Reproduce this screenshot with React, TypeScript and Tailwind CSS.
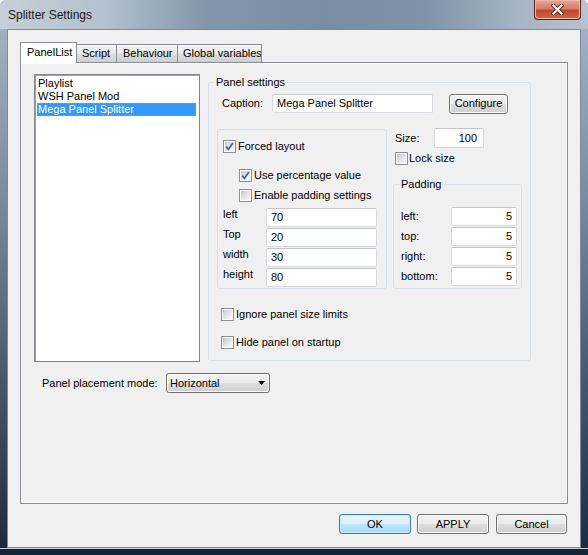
import React from "react";

// ─── small win7 controls ───
function Check({ checked }: { checked?: boolean }) {
  return (
    <span className="relative flex h-[13px] w-[13px] shrink-0 items-center justify-center border border-[#8e8f8f] bg-white">
      <span className="h-[9px] w-[9px] bg-[linear-gradient(135deg,#c4c8ce_0%,#e4e6e9_55%,#fafafa_100%)]" />
      {checked && (
        <svg viewBox="0 0 13 13" className="absolute inset-[-1px] h-[13px] w-[13px]">
          <path d="M3.2 6.6 L5.4 9.4 L9.9 3.1" fill="none" stroke="#4a5e8c" strokeWidth="1.7" />
        </svg>
      )}
    </span>
  );
}

function CheckRow({ checked, label, className = "" }: { checked?: boolean; label: string; className?: string }) {
  return (
    <div className={`flex h-[13px] items-center ${className}`}>
      <Check checked={checked} />
      <span className="ml-[2px] whitespace-nowrap">{label}</span>
    </div>
  );
}

function Field({ value, className = "", right }: { value: string; className?: string; right?: boolean }) {
  return (
    <div
      className={`flex shrink-0 items-center rounded-[2px] border border-[#d6dadf] border-t-[#c2c6cc] bg-white ${
        right ? "justify-end pr-[4px]" : "pl-[4px]"
      } ${className}`}
    >
      {value}
    </div>
  );
}

function Btn({ children, className = "", focus }: { children: React.ReactNode; className?: string; focus?: boolean }) {
  return (
    <div
      className={`flex h-[20px] shrink-0 items-center justify-center rounded-[3px] border ${
        focus
          ? "border-[#3c7fb1] bg-[linear-gradient(#eaf6fd_0%,#d9f0fc_48%,#bee6fd_52%,#a7d9f5_100%)] shadow-[inset_0_0_0_1px_#c6e8fb]"
          : "border-[#707070] bg-[linear-gradient(#f2f2f2_0%,#ebebeb_48%,#dddddd_52%,#cfcfcf_100%)] shadow-[inset_0_0_0_1px_#fbfbfb]"
      } ${className}`}
    >
      {children}
    </div>
  );
}

function CloseButton() {
  return (
    <div className="ml-auto mr-[7px] flex h-[20px] w-[47px] items-center justify-center rounded-b-[4px] border border-t-0 border-[#5b2119] bg-[linear-gradient(#e8a898_0%,#d77c68_45%,#c4442c_55%,#d0694c_100%)] shadow-[inset_0_0_0_1px_#f0b7a8]">
      <svg width="13" height="11" viewBox="0 0 13 11">
        <path d="M2.5 1.5 L10.5 9.5 M10.5 1.5 L2.5 9.5" stroke="#5a2016" strokeWidth="4" strokeLinecap="square" />
        <path d="M2.5 1.5 L10.5 9.5 M10.5 1.5 L2.5 9.5" stroke="#ffffff" strokeWidth="2.2" strokeLinecap="square" />
      </svg>
    </div>
  );
}

// ─── tabs ───
function Tabs() {
  const tab =
    "flex h-[18px] shrink-0 items-center whitespace-nowrap overflow-hidden border border-b-0 border-[#898c95] bg-[linear-gradient(#f3f3f3_0%,#ebebeb_48%,#dddddd_52%,#cfcfcf_100%)] shadow-[inset_0_1px_0_#fcfcfc]";
  return (
    <div className="flex h-[20px] shrink-0 items-end">
      <div className="relative z-10 -mb-px flex h-[21px] w-[57px] shrink-0 whitespace-nowrap border border-b-0 border-[#898c95] bg-white pl-[6px] pt-[3px]">
        PanelList
      </div>
      <div className={`${tab} -ml-px w-[41px] pl-[5px]`}>Script</div>
      <div className={`${tab} -ml-px w-[62px] pl-[6px]`}>Behaviour</div>
      <div className={`${tab} -ml-px w-[85px] pl-[5px]`}>Global variables</div>
    </div>
  );
}

const LIST = ["Playlist", "WSH Panel Mod", "Mega Panel Splitter"];

export default function App() {
  return (
    <div className="flex h-[555px] w-[588px] flex-col overflow-hidden rounded-t-[6px] bg-[linear-gradient(180deg,#a9b6c4_0%,#7b8ca0_35%,#46566a_70%,#1b2a3f_100%)] font-['Liberation_Sans',Arial,sans-serif] text-[11px] leading-[13px] text-black">
      {/* title bar */}
      <div className="flex h-[29px] shrink-0 items-start bg-[linear-gradient(90deg,#c6cfd9_0%,#b3c0cd_18%,#8496ab_35%,#788ca3_55%,#7f92a8_72%,#a6b4c3_88%,#b6c2ce_100%)]">
        <span className="mt-[8px] pl-[8px] text-[12px] leading-[14px] text-[#1a1a1a]">Splitter Settings</span>
        <CloseButton />
      </div>

      {/* client */}
      <div className="flex min-h-0 flex-1 px-[7px]">
        <div className="flex flex-1 flex-col border border-[#7c8b9c] bg-[#f0f0f0] px-[12px] pt-[12px]">
          <Tabs />

          <div className="flex h-[442px] shrink-0 flex-col border border-[#898c95] bg-[#f0f0f0] pl-[13px] pt-[11px] shadow-[inset_0_0_0_1px_#ffffff]">
            <div className="flex items-start">
              {/* panel list */}
              <div className="h-[288px] w-[166px] shrink-0 border border-[#828790] bg-white pl-[2px] pr-[3px] pt-[2px] shadow-[inset_1px_1px_0_#a0a0a0]">
                {LIST.map((item, i) =>
                  i === 2 ? (
                    <div key={item} className="h-[13px] border border-dotted border-[#c98a4a] bg-[#3399ff] leading-[11px] text-white">
                      {item}
                    </div>
                  ) : (
                    <div key={item} className="h-[13px] pl-[1px]">
                      {item}
                    </div>
                  )
                )}
              </div>

              {/* panel settings */}
              <fieldset className="ml-[8px] mt-[2px] h-[285px] w-[323px] shrink-0 rounded-[3px] border border-[#d5dfe5]">
                <legend className="ml-[5px] px-[2px] leading-[13px]">Panel settings</legend>

                <div className="ml-[13px] mt-[5px] flex h-[19px] items-center">
                  <span className="w-[50px] shrink-0">Caption:</span>
                  <Field value="Mega Panel Splitter" className="h-[19px] w-[161px]" />
                  <Btn className="ml-[16px] h-[19px] w-[59px]">Configure</Btn>
                </div>

                <div className="ml-[8px] mt-[16px] flex items-start">
                  {/* forced layout box */}
                  <div className="h-[160px] w-[170px] shrink-0 rounded-[3px] border border-[#d5dfe5] pl-[5px] pt-[10px]">
                    <CheckRow checked label="Forced layout" />
                    <CheckRow checked label="Use percentage value" className="ml-[16px] mt-[16px]" />
                    <CheckRow label="Enable padding settings" className="ml-[16px] mt-[7px]" />
                    <div className="mt-[6px] flex flex-col gap-[1px]">
                      {[
                        ["left", "70"],
                        ["Top", "20"],
                        ["width", "30"],
                        ["height", "80"],
                      ].map(([k, v]) => (
                        <div key={k} className="flex h-[19px] items-start">
                          <span className="w-[43px] shrink-0">{k}</span>
                          <Field value={v} className="h-[19px] w-[111px]" />
                        </div>
                      ))}
                    </div>
                  </div>

                  {/* size + padding */}
                  <div className="-mt-[1px] ml-[6px] w-[129px] shrink-0">
                    <div className="flex h-[20px] items-center">
                      <span className="ml-[2px] w-[39px] shrink-0">Size:</span>
                      <Field value="100" right className="h-[20px] w-[50px] !pr-[6px]" />
                    </div>
                    <CheckRow label="Lock size" className="ml-[2px] mt-[4px] [&>span:last-child]:ml-[1px]" />
                    <fieldset className="mt-[13px] h-[111px] w-[129px] rounded-[3px] border border-[#d5dfe5]">
                      <legend className="ml-[5px] px-[2px] leading-[13px]">Padding</legend>
                      <div className="mt-[16px] flex flex-col gap-[1px]">
                        {["left:", "top:", "right:", "bottom:"].map((k) => (
                          <div key={k} className="flex h-[19px] items-center">
                            <span className="w-[57px] shrink-0 pl-[7px]">{k}</span>
                            <Field value="5" right className="h-[19px] w-[66px]" />
                          </div>
                        ))}
                      </div>
                    </fieldset>
                  </div>
                </div>

                <CheckRow label="Ignore panel size limits" className="ml-[12px] mt-[19px]" />
                <CheckRow label="Hide panel on startup" className="ml-[12px] mt-[15px]" />
              </fieldset>
            </div>

            {/* placement mode */}
            <div className="ml-[8px] mt-[11px] flex h-[20px] items-center">
              <span className="w-[124px] shrink-0">Panel placement mode:</span>
              <div className="flex h-[20px] w-[104px] items-center rounded-[3px] border border-[#707070] bg-[linear-gradient(#f2f2f2_0%,#ebebeb_48%,#dddddd_52%,#cfcfcf_100%)] pl-[3px] shadow-[inset_0_0_0_1px_#fbfbfb]">
                <span>Horizontal</span>
                <svg width="7" height="4" viewBox="0 0 7 4" className="ml-auto mr-[4px]">
                  <path d="M0 0 H7 L3.5 4 Z" fill="#000" />
                </svg>
              </div>
            </div>
          </div>

          {/* dialog buttons */}
          <div className="mt-[10px] flex justify-end pr-[1px]">
            <Btn focus className="w-[72px]">OK</Btn>
            <Btn className="ml-[6px] w-[72px]">APPLY</Btn>
            <Btn className="ml-[7px] w-[71px]">Cancel</Btn>
          </div>
        </div>
      </div>

      {/* bottom frame */}
      <div className="h-[7px] shrink-0 border-t border-[#c3cad3] bg-[#16253a]" />
    </div>
  );
}
